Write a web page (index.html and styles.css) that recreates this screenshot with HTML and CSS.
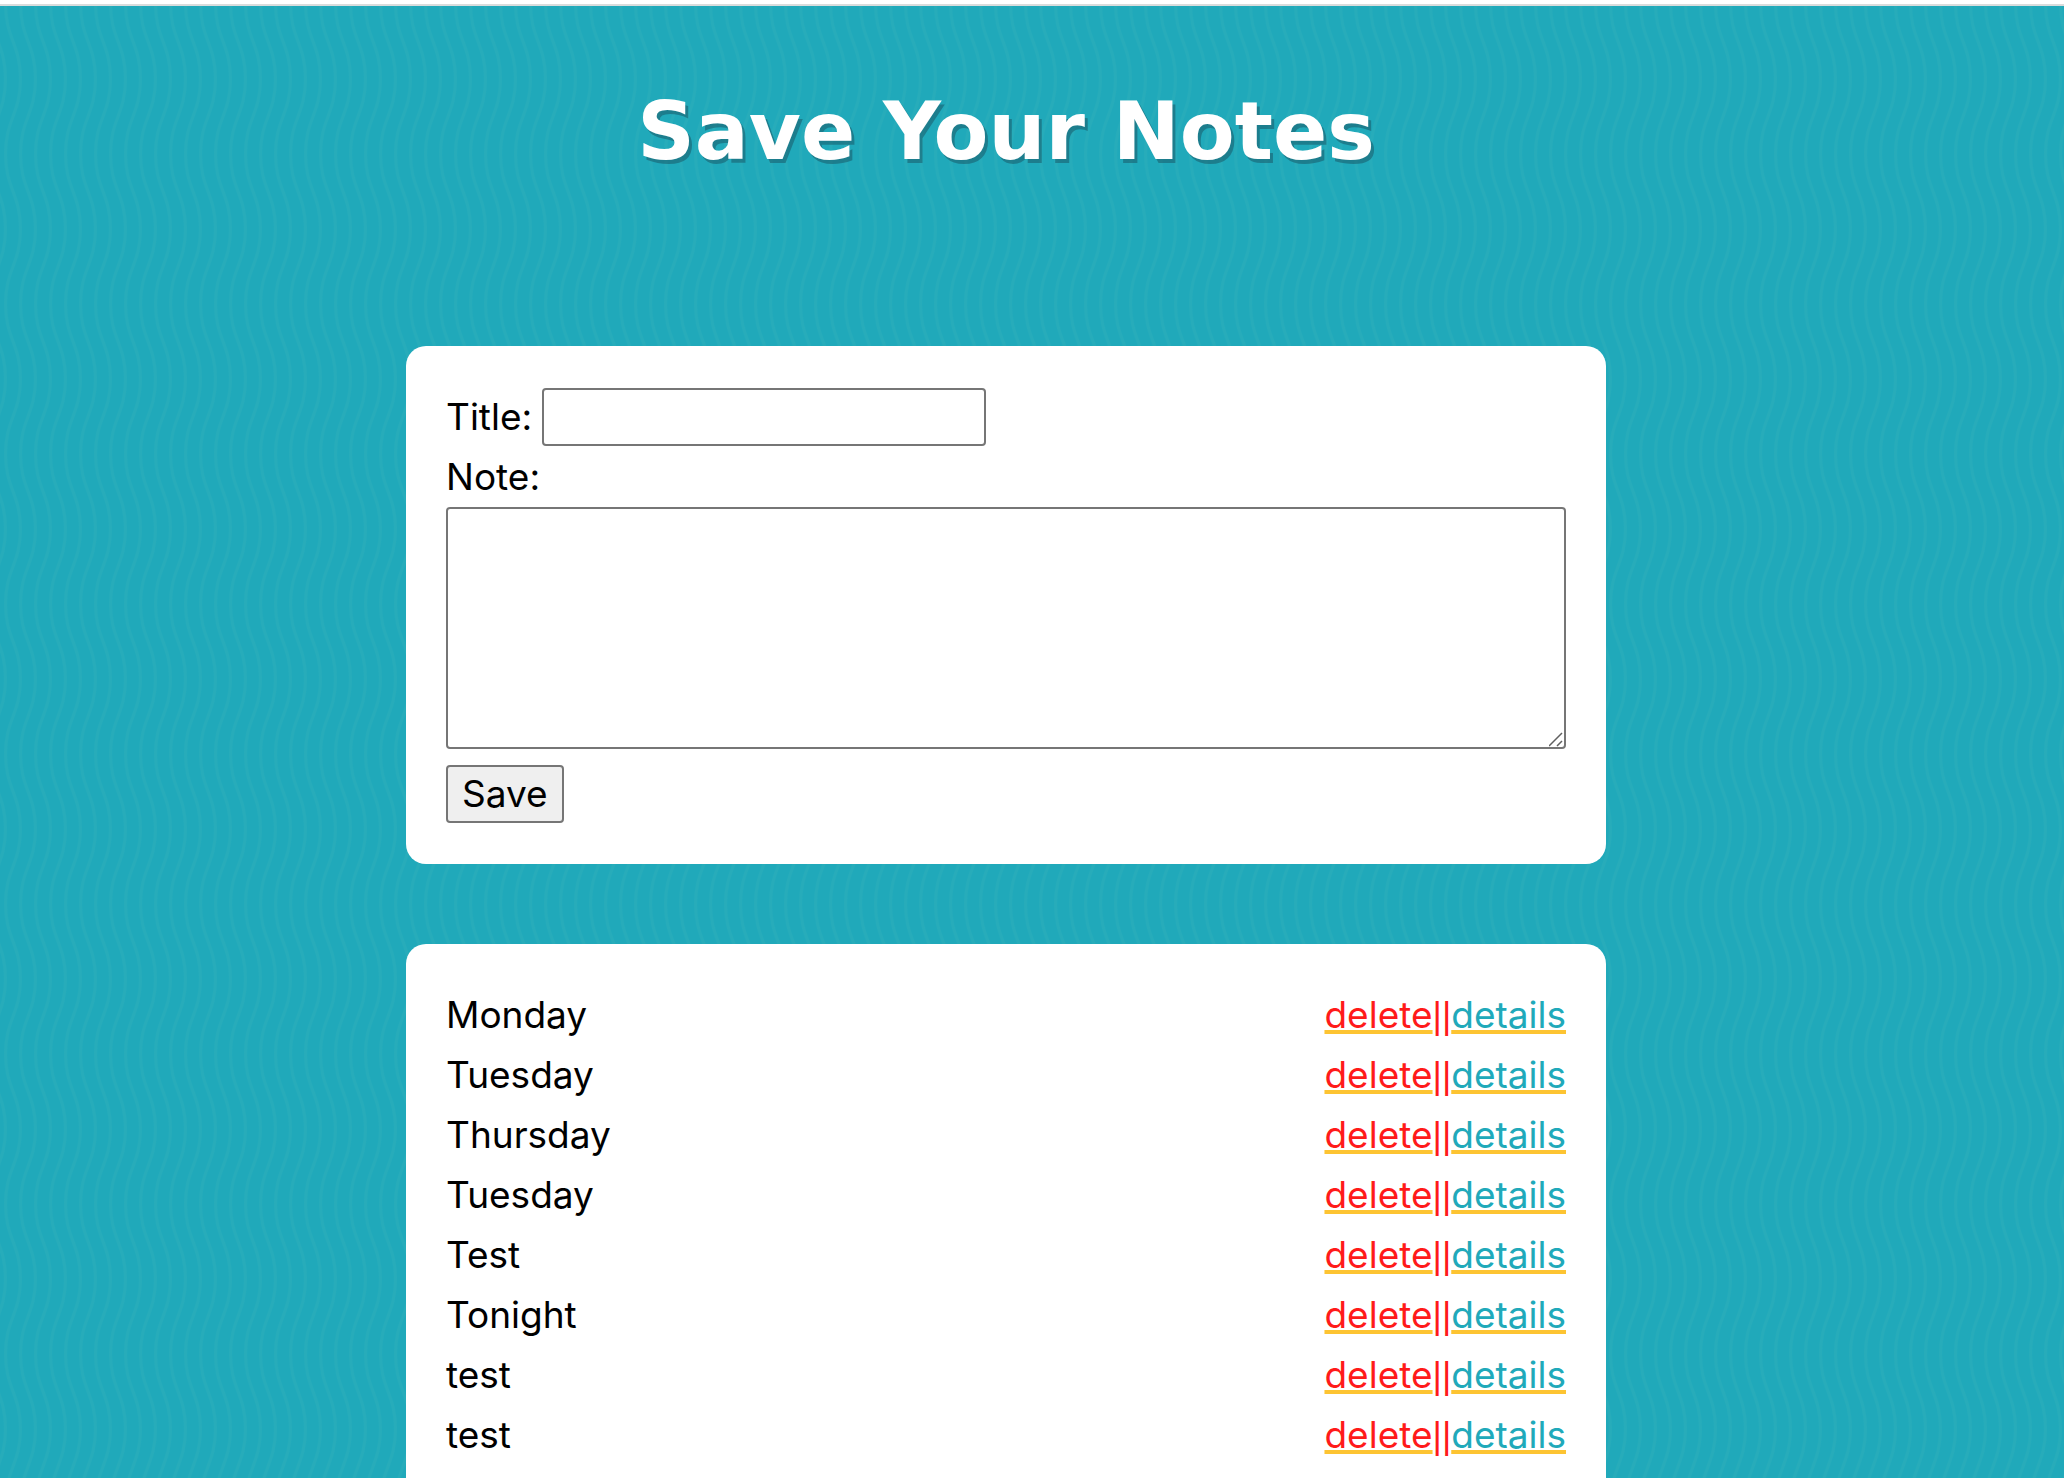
FILE: index.html
```html
<!DOCTYPE html>
<html lang="en">
<head>
<meta charset="utf-8">
<meta name="viewport" content="width=device-width, initial-scale=1">
<title>Save Your Notes</title>
<link rel="stylesheet" href="styles.css">
</head>
<body>
<div class="page">
  <header class="header">
    <h1 class="heading">Save Your Notes</h1>
  </header>
  <main class="content">
    <form class="card form">
      <div class="field">
        <label for="title">Title:</label>
        <input class="text-input" id="title" type="text">
      </div>
      <label class="note-label" for="note">Note:</label>
      <textarea class="note-input" id="note"></textarea>
      <button class="save" type="button">Save</button>
    </form>
    <section class="card notes">
      <ul class="note-list">
        <li class="note"><span>Monday</span><span class="actions"><a class="delete" href="#">delete</a><span class="divider">||</span><a class="details" href="#">details</a></span></li>
        <li class="note"><span>Tuesday</span><span class="actions"><a class="delete" href="#">delete</a><span class="divider">||</span><a class="details" href="#">details</a></span></li>
        <li class="note"><span>Thursday</span><span class="actions"><a class="delete" href="#">delete</a><span class="divider">||</span><a class="details" href="#">details</a></span></li>
        <li class="note"><span>Tuesday</span><span class="actions"><a class="delete" href="#">delete</a><span class="divider">||</span><a class="details" href="#">details</a></span></li>
        <li class="note"><span>Test</span><span class="actions"><a class="delete" href="#">delete</a><span class="divider">||</span><a class="details" href="#">details</a></span></li>
        <li class="note"><span>Tonight</span><span class="actions"><a class="delete" href="#">delete</a><span class="divider">||</span><a class="details" href="#">details</a></span></li>
        <li class="note"><span>test</span><span class="actions"><a class="delete" href="#">delete</a><span class="divider">||</span><a class="details" href="#">details</a></span></li>
        <li class="note"><span>test</span><span class="actions"><a class="delete" href="#">delete</a><span class="divider">||</span><a class="details" href="#">details</a></span></li>
      </ul>
    </section>
  </main>
</div>
</body>
</html>
```
FILE: styles.css
```css
*, *::before, *::after {
  box-sizing: border-box;
}

body {
  margin: 0;
  background: #fff;
  color: #000;
  font-family: Inter, "Liberation Sans", sans-serif;
  font-size: 38px;
  line-height: 60px;
}

.page {
  display: flex;
  flex-direction: column;
  min-height: 100vh;
  padding: 0 52px 0 0;
  border-top: 4px solid #fff;
  box-shadow: inset 0 2px #d9dcdc;
  background-color: #20a9ba;
  background-image: url("data:image/svg+xml,%3Csvg xmlns='http://www.w3.org/2000/svg' width='15' height='150'%3E%3Cg fill='none' stroke='%2327acba' stroke-width='3'%3E%3Cpath d='M-9.5 0C-9.5 34 5.5 41 5.5 75S-9.5 116-9.5 150'/%3E%3Cpath d='M5.5 0C5.5 34 20.5 41 20.5 75S5.5 116 5.5 150'/%3E%3C/g%3E%3C/svg%3E");
}

.header {
  padding: 78px 40px 164px;
}

.heading {
  margin: 0;
  color: #fff;
  font-family: Verdana, "DejaVu Sans", sans-serif;
  font-size: 80px;
  line-height: 100px;
  text-align: center;
  text-shadow: 3px 4px rgba(26, 96, 112, 0.6);
}

.content {
  display: flex;
  flex: 1;
  flex-direction: column;
  gap: 80px;
  width: 100%;
  max-width: 1200px;
  margin: 0 auto;
}

.card {
  padding: 41px 40px;
  border-radius: 20px;
  background: #fff;
}

.form {
  display: flex;
  flex-direction: column;
  align-items: flex-start;
}

.field {
  display: flex;
  align-items: center;
  gap: 10px;
}

.text-input,
.note-input,
.save {
  border: 2px solid #767676;
  border-radius: 4px;
  color: #000;
  font: inherit;
}

.form,
.note {
  font-size: 37px;
}

.text-input {
  width: 444px;
  height: 58px;
  padding: 2px 4px;
  background: #fff;
}

.note-input {
  width: 100%;
  height: 242px;
  padding: 4px;
  background: #fff;
  resize: vertical;
}

.note-input::-webkit-resizer {
  background: url("data:image/svg+xml,%3Csvg xmlns='http://www.w3.org/2000/svg' width='15' height='15'%3E%3Cpath d='M0 14 13 1M8 14l5-5' stroke='%23606060' stroke-width='1.5'/%3E%3C/svg%3E") no-repeat;
}

.save {
  height: 58px;
  margin-top: 16px;
  padding: 0 14px;
  background: #efefef;
  line-height: 54px;
}

.notes {
  flex: 1;
  padding-bottom: 0;
  border-radius: 20px 20px 0 0;
}

.note-list {
  margin: 0;
  padding: 0;
  list-style: none;
}

.note {
  display: flex;
  justify-content: space-between;
}

.actions,
.delete {
  color: #ff1a1a;
}

.divider {
  font-family: "Liberation Sans", Arial, sans-serif;
  font-size: 36px;
  line-height: 1;
}

.details {
  color: #20a9ba;
}

.delete,
.details {
  text-decoration: underline 4px #fdc432;
  text-underline-offset: 2px;
  text-decoration-skip-ink: none;
}
```
